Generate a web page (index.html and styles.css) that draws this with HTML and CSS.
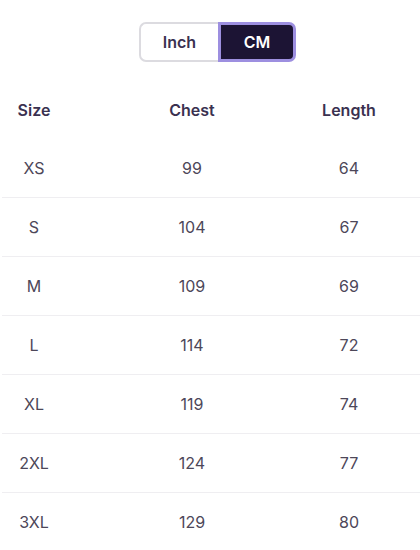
FILE: index.html
```html
<!DOCTYPE html>
<html>
<head>
<meta charset="utf-8">
<link rel="stylesheet" href="styles.css">
</head>
<body>
<div class="page">
  <div class="toggle">
    <button class="btn btn-inch">Inch</button>
    <button class="btn btn-cm">CM</button>
  </div>
  <div class="table">
    <div class="row head"><div>Size</div><div>Chest</div><div>Length</div></div>
    <div class="row first"><div>XS</div><div>99</div><div>64</div></div>
    <div class="row"><div>S</div><div>104</div><div>67</div></div>
    <div class="row"><div>M</div><div>109</div><div>69</div></div>
    <div class="row"><div>L</div><div>114</div><div>72</div></div>
    <div class="row"><div>XL</div><div>119</div><div>74</div></div>
    <div class="row"><div>2XL</div><div>124</div><div>77</div></div>
    <div class="row"><div>3XL</div><div>129</div><div>80</div></div>
  </div>
</div>
</body>
</html>
```
FILE: styles.css
```css
html, body { margin: 0; padding: 0; background: #fff; }
body { font-family: Inter, "DejaVu Sans", sans-serif; color: #46404f; overflow: hidden; }
.page { padding-top: 22px; padding-left: 2px; }
.toggle { display: flex; justify-content: center; padding-left: 13px; }
.btn {
  font-family: Inter, "DejaVu Sans", sans-serif;
  font-size: 16px; font-weight: 600;
  height: 40px; box-sizing: border-box; margin: 0; padding: 0; cursor: pointer;
}
.btn-inch {
  width: 79px; background: #fff; color: #3a3150;
  border: 2px solid #dcdbe0; border-right: none;
  border-radius: 7px 0 0 7px;
}
.btn-cm {
  width: 78px; background: #1c1434; color: #fff;
  border: 3px solid #9d8fe0; border-radius: 0 7px 7px 0;
}
.table { margin-top: 19px; }
.row {
  display: grid; grid-template-columns: 64px 252px 62px;
  height: 59px; box-sizing: border-box; align-items: center; text-align: center;
  font-size: 16px; color: #4d4759;
  border-top: 1px solid #efeef1;
}
.row.head, .row.first { border-top: none; height: 58px; }
.row.head { font-weight: 600; color: #3a3150; }
```
